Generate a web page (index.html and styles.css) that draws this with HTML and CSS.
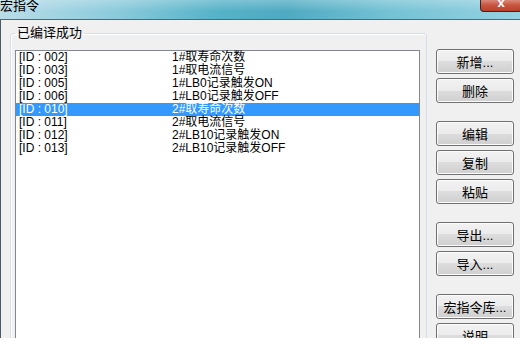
FILE: index.html
```html
<!DOCTYPE html>
<html lang="zh-CN">
<head>
    <meta charset="UTF-8">
    <title>宏指令</title>
    <link rel="stylesheet" href="styles.css">
</head>
<body>
    <div class="window">
        <div class="titlebar">
            <span class="title">宏指令</span>
            <span class="close">x</span>
        </div>
        <div class="client">
            <fieldset class="group">
                <legend>已编译成功</legend>
                <ul class="listbox">
                    <li><span>[ID : 002]</span><span>1#取寿命次数</span></li>
                    <li><span>[ID : 003]</span><span>1#取电流信号</span></li>
                    <li><span>[ID : 005]</span><span>1#LB0记录触发ON</span></li>
                    <li><span>[ID : 006]</span><span>1#LB0记录触发OFF</span></li>
                    <li class="selected"><span>[ID : 010]</span><span>2#取寿命次数</span></li>
                    <li><span>[ID : 011]</span><span>2#取电流信号</span></li>
                    <li><span>[ID : 012]</span><span>2#LB10记录触发ON</span></li>
                    <li><span>[ID : 013]</span><span>2#LB10记录触发OFF</span></li>
                </ul>
            </fieldset>
            <div class="buttons">
                <div class="btn-group">
                    <button class="btn">新增...</button>
                    <button class="btn">删除</button>
                </div>
                <div class="btn-group">
                    <button class="btn">编辑</button>
                    <button class="btn">复制</button>
                    <button class="btn">粘贴</button>
                </div>
                <div class="btn-group">
                    <button class="btn">导出...</button>
                    <button class="btn">导入...</button>
                </div>
                <div class="btn-group">
                    <button class="btn">宏指令库...</button>
                    <button class="btn">说明</button>
                </div>
            </div>
        </div>
    </div>
</body>
</html>
```

FILE: styles.css
```css
body {
    margin: 0;
    background: #fff;
    font-family: "Liberation Sans", "Noto Sans CJK SC", sans-serif;
    font-size: 12px;
    color: #000;
}
.window {
    width: 520px;
    height: 338px;
    overflow: hidden;
    background: #f0f0f0;
    display: flex;
    flex-direction: column;
}
.titlebar {
    height: 19px;
    flex: none;
    display: flex;
    justify-content: space-between;
    align-items: flex-start;
    border-bottom: 1px solid #3f6f80;
    background:
        linear-gradient(180deg, rgba(255, 255, 255, 0.25), rgba(255, 255, 255, 0) 60%),
        linear-gradient(90deg, #b9dde8 0%, #8ccbdc 22%, #55b2c8 42%, #4eaac2 55%, #74c2d4 75%, #95d2e2 100%);
}
.title {
    font-size: 13px;
    line-height: 12px;
}
.close {
    width: 42px;
    height: 12px;
    margin-right: -2px;
    box-sizing: border-box;
    border: 1px solid #4d1e18;
    border-top: none;
    border-radius: 0 0 4px 4px;
    background: linear-gradient(180deg, #d98a7c 0%, #c9563f 45%, #b8402a 100%);
    color: #fff;
    font-weight: bold;
    font-size: 13px;
    line-height: 6px;
    text-align: center;
}
.client {
    flex: 1;
    display: flex;
    align-items: flex-start;
    border-left: 1px solid #4a5966;
    padding-left: 9px;
    min-height: 0;
}
.group {
    margin: 5px 0 0;
    width: 417px;
    height: 340px;
    box-sizing: border-box;
    border: 1px solid #d5dfe5;
    border-radius: 3px;
    padding: 9px 6px 0 4px;
    box-shadow: inset 1px 1px 0 #fff;
}
.group legend {
    padding: 0 2px;
    margin-left: 0;
    line-height: 16px;
    font-size: 13px;
}
.listbox {
    list-style: none;
    margin: 0;
    padding: 0;
    height: 300px;
    background: #fff;
    border: 1px solid #828790;
}
.listbox li {
    display: grid;
    grid-template-columns: 153px 1fr;
    height: 13px;
    line-height: 13px;
    padding-left: 3px;
    white-space: nowrap;
}
.listbox li.selected {
    background: #3399ff;
    color: #fff;
}
.buttons {
    margin: 29px 0 0 9px;
    width: 78px;
    display: flex;
    flex-direction: column;
    gap: 18px;
}
.btn-group {
    display: flex;
    flex-direction: column;
    gap: 4px;
}
.btn {
    height: 25px;
    width: 78px;
    padding: 0;
    border: 1px solid #707070;
    border-radius: 3px;
    background: linear-gradient(180deg, #f2f2f2 0%, #ebebeb 50%, #dddddd 50%, #cfcfcf 100%);
    box-shadow: inset 0 0 0 1px #fcfcfc;
    font-family: "Liberation Sans", "Noto Sans CJK SC", sans-serif;
    font-size: 13px;
    color: #000;
}
```
